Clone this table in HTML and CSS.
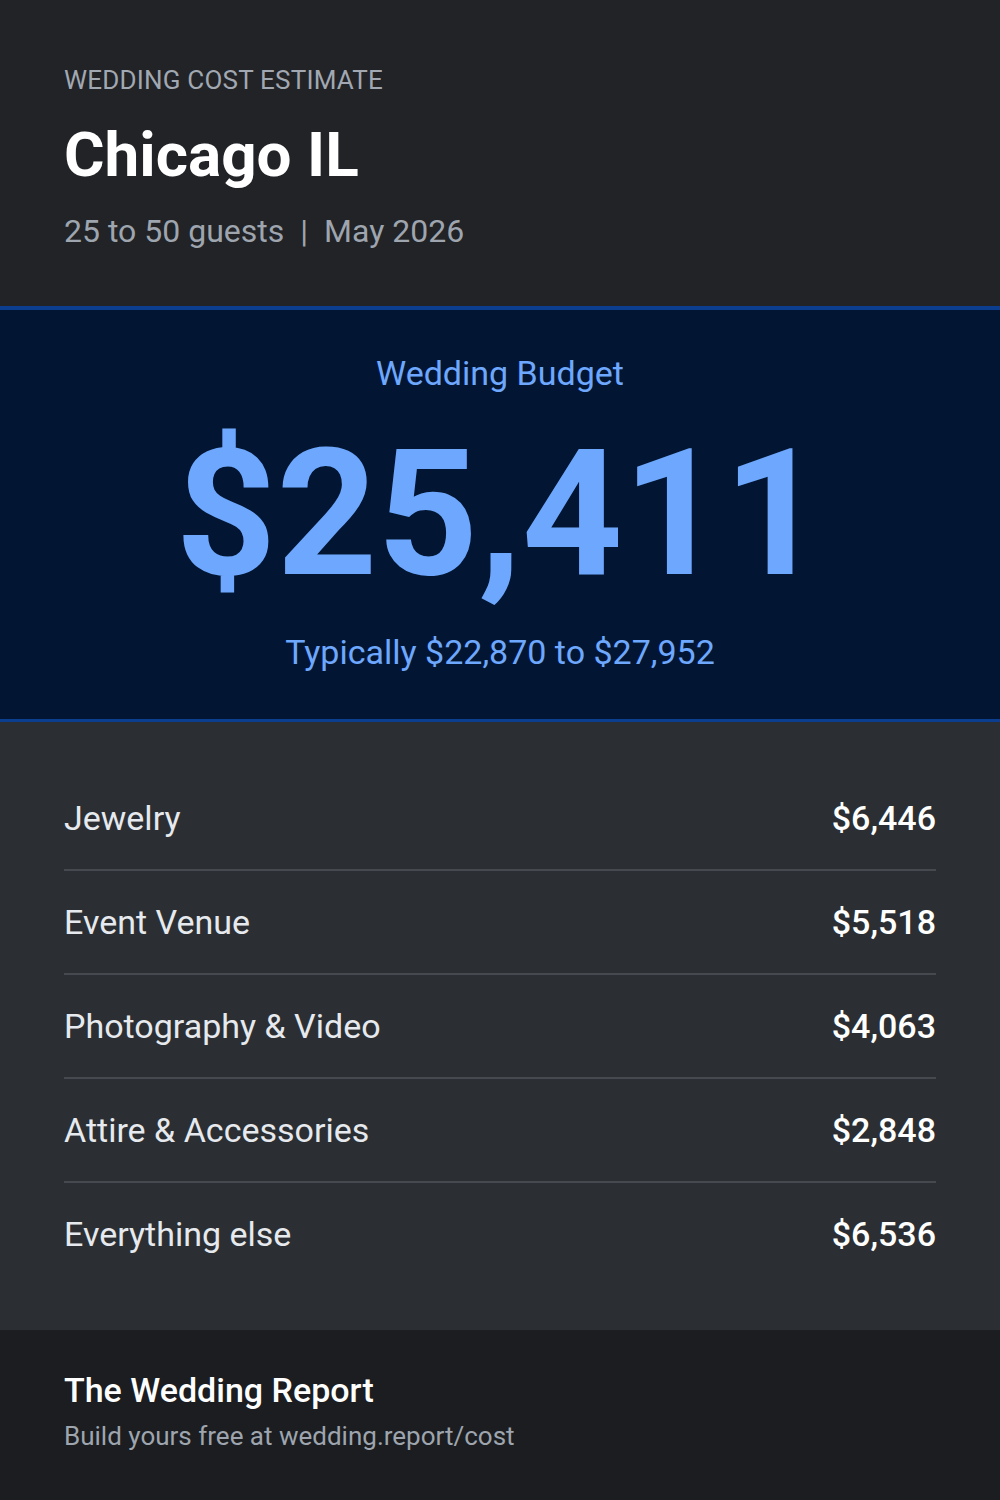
FILE: index.html
```html
<!DOCTYPE html>
<html lang="en">
<head>
<meta charset="utf-8">
<title>Wedding Cost Estimate – Chicago IL</title>
<link rel="stylesheet" href="styles.css">
</head>
<body>
<div class="card">
  <header class="head">
    <div class="eyebrow">WEDDING COST ESTIMATE</div>
    <h1 class="city">Chicago IL</h1>
    <div class="meta">25 to 50 guests<span class="sep">|</span>May 2026</div>
  </header>
  <section class="budget">
    <div class="budget-label">Wedding Budget</div>
    <div class="budget-total">$25,411</div>
    <div class="budget-range">Typically $22,870 to $27,952</div>
  </section>
  <section class="items">
    <div class="row"><span class="name">Jewelry</span><span class="amt">$6,446</span></div>
    <div class="row"><span class="name">Event Venue</span><span class="amt">$5,518</span></div>
    <div class="row"><span class="name">Photography &amp; Video</span><span class="amt">$4,063</span></div>
    <div class="row"><span class="name">Attire &amp; Accessories</span><span class="amt">$2,848</span></div>
    <div class="row"><span class="name">Everything else</span><span class="amt">$6,536</span></div>
  </section>
  <footer class="foot">
    <div class="brand">The Wedding Report</div>
    <div class="cta">Build yours free at wedding.report/cost</div>
  </footer>
</div>
</body>
</html>
```
FILE: styles.css
```css
* { box-sizing: border-box; }
html, body { margin: 0; padding: 0; }
body {
  font-family: Roboto, "Liberation Sans", sans-serif;
  background: #1b1d20;
  width: 1000px;
}
.card { display: flex; flex-direction: column; width: 1000px; height: 1500px; }

.head {
  background: #212327;
  padding: 64px 64px 56px;
  height: 306px;
}
.eyebrow {
  font-size: 26px;
  line-height: 32px;
  color: #a1a8b1;
  font-weight: 400;
  letter-spacing: 0.2px;
}
.city {
  margin: 22px 0 0;
  font-size: 62px;
  line-height: 74px;
  font-weight: 700;
  color: #ffffff;
}
.meta {
  margin-top: 20px;
  font-size: 32px;
  line-height: 38px;
  color: #9ea5ae;
}
.sep { margin: 0 16px; }

.budget {
  background: #021633;
  border-top: 4px solid #0c3e8f;
  border-bottom: 3px solid #0c3e8f;
  padding: 43px 0 47px;
  text-align: center;
  color: #6ea8fe;
  height: 416px;
}
.budget-label { font-size: 34px; line-height: 40px; }
.budget-total {
  margin-top: 33px;
  font-size: 176px;
  line-height: 176px;
  font-weight: 700;
}
.budget-range { margin-top: 30px; font-size: 34px; line-height: 40px; }

.items {
  background: #2b2f33;
  padding: 45px 64px;
  height: 608px;
}
.row {
  display: flex;
  justify-content: space-between;
  align-items: center;
  padding: 31px 0;
  font-size: 34px;
  line-height: 40px;
  border-bottom: 2px solid #464a50;
}
.row:last-child { border-bottom: none; }
.name { color: #e6e9ed; }
.amt { color: #ffffff; font-weight: 500; }

.foot {
  background: #1b1d20;
  padding: 40px 64px 48px;
  height: 170px;
}
.brand { font-size: 34px; line-height: 40px; font-weight: 500; color: #ffffff; }
.cta { margin-top: 10px; font-size: 26px; line-height: 32px; color: #9ea5ae; }
```
